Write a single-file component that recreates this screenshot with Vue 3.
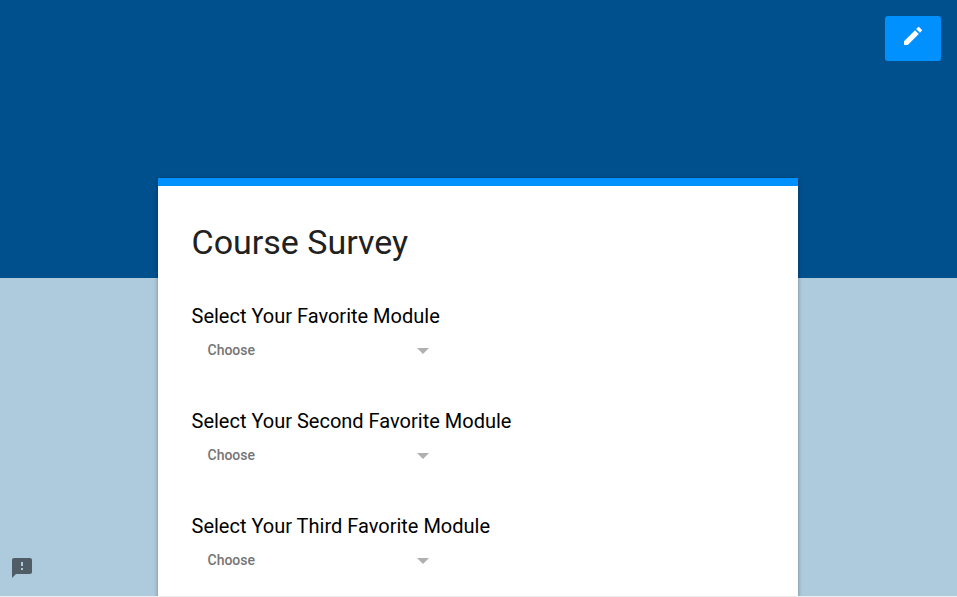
<script setup>
const questions = [
  'Select Your Favorite Module',
  'Select Your Second Favorite Module',
  'Select Your Third Favorite Module',
]
</script>

<template>
  <div class="page">
    <div class="banner"></div>
    <main class="card">
      <h1>Course Survey</h1>
      <section v-for="q in questions" :key="q" class="question">
        <h2>{{ q }}</h2>
        <div class="select">
          <span>Choose</span>
          <i class="arrow"></i>
        </div>
      </section>
    </main>
    <button class="edit" aria-label="Edit">
      <svg width="24" height="24" viewBox="0 0 24 24" fill="#fff">
        <path d="M3 17.25V21h3.75L17.81 9.94l-3.75-3.75L3 17.25zM20.71 7.04a1 1 0 0 0 0-1.41l-2.34-2.34a1 1 0 0 0-1.41 0l-1.83 1.83 3.75 3.75 1.83-1.83z" />
      </svg>
    </button>
    <svg class="feedback" width="24" height="24" viewBox="0 0 24 24">
      <path fill="#505d66" d="M20 2H4c-1.1 0-1.99.9-1.99 2L2 22l4-4h14c1.1 0 2-.9 2-2V4c0-1.100-.9-2-2-2zm-7 12h-2v-2h2v2zm0-4h-2V6h2v4z" />
    </svg>
  </div>
</template>

<style>
body {
  margin: 0;
  overflow: hidden;
}
#app {
  background: #eee;
  padding-bottom: 1px;
}
</style>

<style scoped>
.page {
  position: relative;
  height: 596px;
  overflow: hidden;
  background: #aecadd;
  font-family: Roboto, sans-serif;
  display: flex;
  flex-direction: column;
}
.banner {
  flex: none;
  height: 278px;
  background: #00508d;
}
.card {
  position: relative;
  flex: none;
  box-sizing: border-box;
  width: 640px;
  height: 560px;
  margin: -100px 0 0 158px;
  padding: 33px 34px 0 33.5px;
  border-top: 8px solid #0091ff;
  background: #fff;
  box-shadow: 0 1px 4px rgba(0, 0, 0, 0.37);
}
h1 {
  margin: 0;
  font-size: 34px;
  line-height: 46px;
  font-weight: 400;
  color: #212121;
}
.question {
  height: 105px;
}
.question:first-of-type {
  margin-top: 38px;
}
h2 {
  margin: 0;
  font-size: 20px;
  line-height: 27px;
  font-weight: 400;
  color: #000;
}
.select {
  display: flex;
  align-items: center;
  justify-content: space-between;
  width: 221.5px;
  height: 20px;
  margin: 10px 0 0 16px;
  font-size: 14px;
  font-weight: 500;
  color: #757575;
}
.arrow {
  margin-top: 2px;
  border: 6px solid transparent;
  border-top-color: #b0b0b0;
  border-bottom: 0;
}
.edit {
  position: absolute;
  top: 16px;
  right: 16px;
  width: 56px;
  height: 45px;
  padding: 0 0 5px;
  border: 0;
  border-radius: 3px;
  background: #0091ff;
  display: flex;
  align-items: center;
  justify-content: center;
}
.feedback {
  position: absolute;
  left: 10px;
  top: 556px;
}
</style>
